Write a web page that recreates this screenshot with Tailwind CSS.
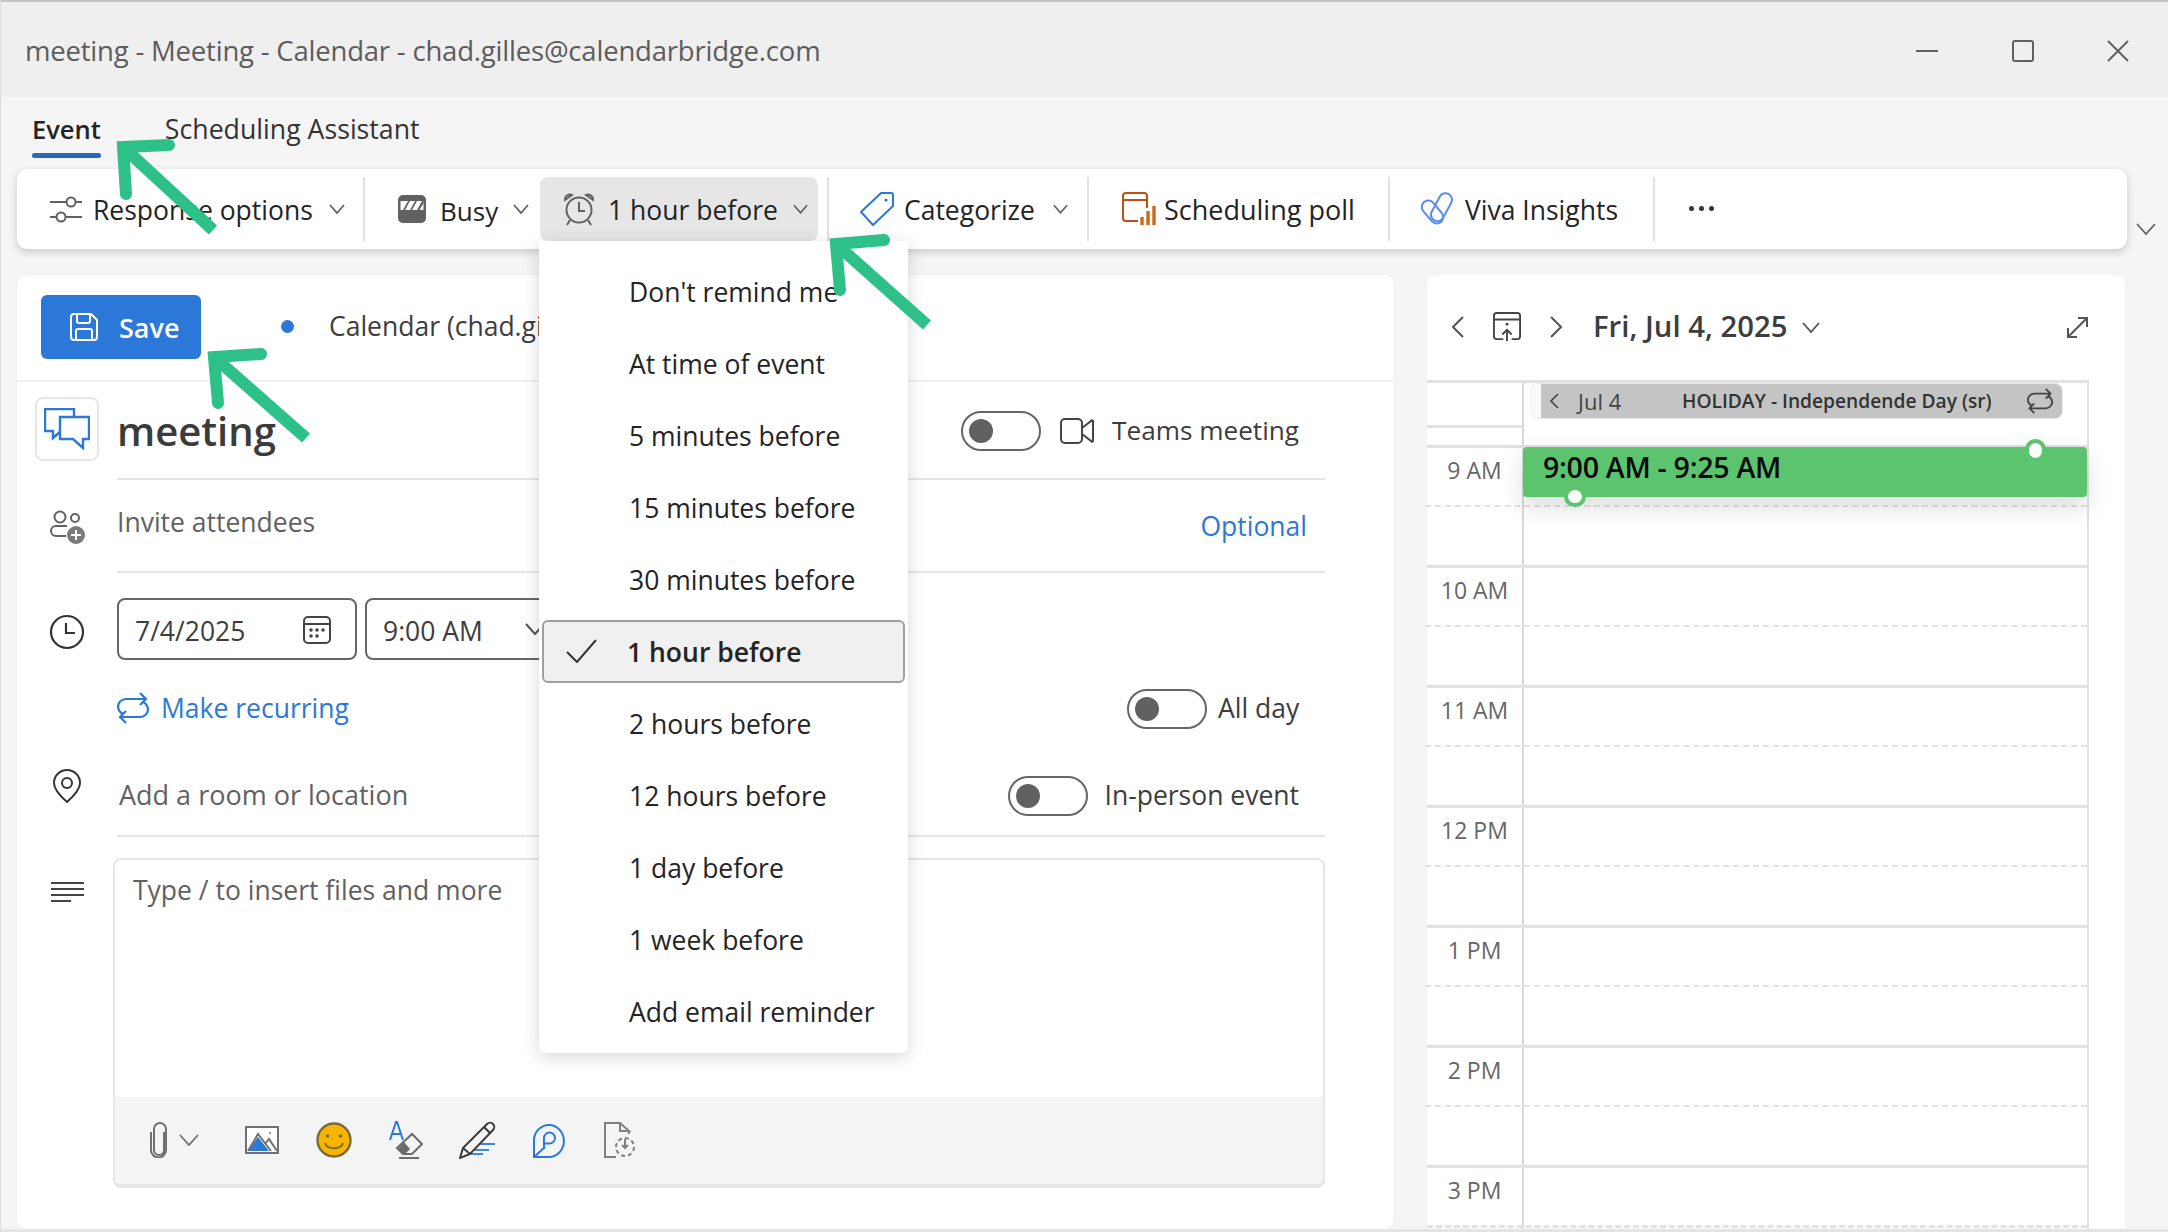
<!doctype html>
<html><head><meta charset="utf-8"><script src="https://cdn.jsdelivr.net/npm/@tailwindcss/browser@4"></script></head>
<body class="m-0">
<div class="relative w-[2168px] h-[1232px] overflow-hidden bg-[#f5f5f5] font-['Open_Sans',sans-serif] text-[#242424] text-[26.5px] flex flex-col">
  <div class="h-[2px] bg-[#c4c4c4]"></div>
  <!-- title bar -->
  <div class="h-[95px] bg-[#efefef] flex items-center pl-[25px] pr-[39px] pt-[3px] justify-between shrink-0">
    <span class="text-[#5c5c5c] text-[27.5px] tracking-[-0.2px]">meeting - Meeting - Calendar - chad.gilles@calendarbridge.com</span>
    <div class="flex items-center gap-[72px] text-[#616161]">
      <svg width="24" height="24" viewBox="0 0 24 24" fill="none" stroke="currentColor" stroke-width="2"><path d="M1 12h22"/></svg>
      <svg width="24" height="24" viewBox="0 0 24 24" fill="none" stroke="currentColor" stroke-width="2"><rect x="2" y="2" width="20" height="20" rx="2"/></svg>
      <svg width="22" height="22" viewBox="0 0 22 22" fill="none" stroke="currentColor" stroke-width="2"><path d="M1 1l20 20M21 1L1 21"/></svg>
    </div>
  </div>
  <!-- tabs -->
  <div class="h-[72px] flex pl-[32px] gap-[64px] relative shrink-0">
    <div class="relative h-[61px] flex items-end pb-[10px] font-semibold text-[25.5px]">Event<div class="absolute left-0 right-0 bottom-0 h-[5px] rounded bg-[#2b66b8]"></div></div>
    <div class="h-[61px] flex items-end pb-[9px] text-[26.7px] text-[#333]">Scheduling Assistant</div>
  </div>
  <!-- toolbar -->
  <div class="ml-[17px] w-[2110px] h-[80px] rounded-[10px] bg-white shadow-[0_3px_8px_rgba(0,0,0,0.18)] flex items-center shrink-0 relative z-10">
    <div class="w-[346px] pl-[33px] flex items-center h-[64px]">
      <svg width="32" height="32" viewBox="0 0 32 32" fill="none" stroke="#616161" stroke-width="2"><path d="M0 9h16M26 9h6M0 24h6M16 24h16"/><circle cx="21" cy="9" r="4.5"/><circle cx="11" cy="24" r="4.5"/></svg>
      <span class="ml-[11px] w-[219px] pt-[4px] whitespace-nowrap">Response options</span>
      <svg class="ml-[17px]" width="16" height="10" viewBox="0 0 16 10" fill="none" stroke="#616161" stroke-width="1.8"><path d="M1 1l7 8 7-8"/></svg>
    </div>
    <div class="w-[2px] h-[64px] bg-[#e0e0e0]"></div>
    <div class="w-[175px] pl-[33px] flex items-center h-[64px]">
      <svg width="28" height="28" viewBox="0 0 28 28"><rect x="0" y="0" width="28" height="28" rx="5" fill="#616161"/><path d="M2.5 6h23v9h-23z" fill="#fff"/><path d="M5 15l5-9h2l-5 9zM12 15l5-9h2l-5 9zM19 15l5-9h1.5v2l-4 7z" fill="#616161"/></svg>
      <span class="ml-[14px] w-[57px] pt-[4px] text-[26px]">Busy</span>
      <svg class="ml-[16px]" width="16" height="10" viewBox="0 0 16 10" fill="none" stroke="#616161" stroke-width="1.8"><path d="M1 1l7 8 7-8"/></svg>
    </div>
    <div class="w-[278px] pl-[23px] flex items-center h-[64px] rounded-[8px] bg-[#e6e6e6]">
      <svg width="32" height="34" viewBox="0 0 32 34" fill="none" stroke="#616161" stroke-width="2"><circle cx="16" cy="18" r="12.5"/><path d="M16 10v9h6M2 8a5 5 0 0 1 7-5zM30 8a5 5 0 0 0-7-5zM7 28l-3 5M25 28l3 5"/></svg>
      <span class="ml-[13px] w-[168px] pt-[4px] whitespace-nowrap">1 hour before</span>
      <svg class="ml-[17px]" width="15" height="10" viewBox="0 0 16 10" fill="none" stroke="#616161" stroke-width="1.8"><path d="M1 1l7 8 7-8"/></svg>
    </div>
    <div class="ml-[9px] w-[2px] h-[64px] bg-[#e0e0e0]"></div>
    <div class="w-[258px] pl-[31px] flex items-center h-[64px]">
      <svg width="34" height="34" viewBox="0 0 34 34" fill="none" stroke="#2b78d8" stroke-width="2"><path d="M21 1h10a2 2 0 0 1 2 2v11L13 33 1 20z" stroke-linejoin="round"/><circle cx="26" cy="8" r="1.6" fill="#2b78d8" stroke="none"/></svg>
      <span class="ml-[10px] w-[133px] pt-[4px] whitespace-nowrap">Categorize</span>
      <svg class="ml-[16px]" width="15" height="10" viewBox="0 0 16 10" fill="none" stroke="#616161" stroke-width="1.8"><path d="M1 1l7 8 7-8"/></svg>
    </div>
    <div class="w-[2px] h-[64px] bg-[#e0e0e0]"></div>
    <div class="w-[299px] pl-[33px] flex items-center h-[64px]">
      <svg width="34" height="34" viewBox="0 0 34 34" fill="none" stroke="#c04f12" stroke-width="2"><path d="M16 29H4a3 3 0 0 1-3-3V4a3 3 0 0 1 3-3h18a3 3 0 0 1 3 3v12M1 8h24"/><path d="M20 33v-8M26 33V19M32 33V14" stroke-width="3.4" stroke="#d0651c"/></svg>
      <span class="ml-[8px] w-[192px] pt-[3px] whitespace-nowrap text-[27px]">Scheduling poll</span>
    </div>
    <div class="w-[2px] h-[64px] bg-[#e0e0e0]"></div>
    <div class="w-[263px] pl-[31px] flex items-center h-[64px]">
      <svg width="32" height="36" viewBox="0 0 32 36" fill="none" stroke="#5b8cf0" stroke-width="2"><rect x="5" y="8" width="13" height="26" rx="6.5" transform="rotate(-40 11.5 21)"/><rect x="14" y="1" width="13" height="30" rx="6.5" transform="rotate(28 20 16)"/></svg>
      <span class="ml-[12px] w-[157px] pt-[4px] whitespace-nowrap">Viva Insights</span>
    </div>
    <div class="w-[2px] h-[64px] bg-[#e0e0e0]"></div>
    <div class="pl-[34px] pb-[2px] flex gap-[5px]"><span class="w-[5px] h-[5px] rounded-full bg-[#333]"></span><span class="w-[5px] h-[5px] rounded-full bg-[#333]"></span><span class="w-[5px] h-[5px] rounded-full bg-[#333]"></span></div>
  </div>
  <svg class="absolute left-[2136px] top-[223px]" width="20" height="12" viewBox="0 0 20 12" fill="none" stroke="#616161" stroke-width="1.8"><path d="M1 1l9 10 9-10"/></svg>
  <!-- main -->
  <div class="flex pl-[17px] mt-[26px] h-[954px] gap-[33px] shrink-0">
    <!-- form card -->
    <div class="w-[1377px] bg-white rounded-[10px] shadow-[0_0_3px_rgba(0,0,0,0.05)] flex flex-col">
      <div class="h-[107px] border-b-2 border-[#f0f0f0] flex items-center pl-[24px] pb-[2px]">
        <div class="w-[160px] h-[64px] rounded-[6px] bg-[#2b78d8] flex items-center pl-[29px] text-white font-semibold text-[27px]">
          <svg width="28" height="28" viewBox="0 0 28 28" fill="none" stroke="#fff" stroke-width="2"><path d="M1 4a3 3 0 0 1 3-3h17l6 6v17a3 3 0 0 1-3 3H4a3 3 0 0 1-3-3z"/><path d="M7 1v7a2 2 0 0 0 2 2h9a2 2 0 0 0 2-2V1M6 27V18a2 2 0 0 1 2-2h12a2 2 0 0 1 2 2v9"/></svg>
          <span class="ml-[21px] pt-[3px]">Save</span>
        </div>
        <span class="ml-[80px] w-[13px] h-[13px] rounded-full bg-[#2b78d8]"></span>
        <span class="ml-[35px] text-[#3d3d3d] whitespace-nowrap">Calendar (chad.gilles</span>
      </div>
      <!-- title -->
      <div class="h-[98px] flex shrink-0">
        <div class="w-[100px] pl-[18px] pt-[15px]">
          <div class="w-[64px] h-[64px] rounded-[8px] border-2 border-[#e6e6e6] flex items-center justify-center">
            <svg width="46" height="42" viewBox="0 0 46 42" fill="none" stroke="#2b78d8" stroke-width="2.4"><path d="M30 9V1H1v22h8v7l8-7"/><path d="M16 9h29v22h-6v9l-10-9H16z" fill="#fff"/></svg>
          </div>
        </div>
        <div class="w-[1208px] border-b-2 border-[#e6e6e6] flex items-center pt-[2px]">
          <span class="text-[40px] font-semibold text-[#3b3b3b] w-[844px]">meeting</span>
          <div class="w-[80px] h-[40px] rounded-full border-2 border-[#666] flex items-center pl-[6px]"><span class="w-[24px] h-[24px] rounded-full bg-[#616161]"></span></div>
          <svg class="ml-[19px]" width="34" height="26" viewBox="0 0 34 26" fill="none" stroke="#444" stroke-width="2"><rect x="1" y="1" width="21" height="24" rx="4"/><path d="M22 10l9-7a1 1 0 0 1 2 1v18a1 1 0 0 1-2 1l-9-7"/></svg>
          <span class="ml-[18px] text-[#3d3d3d] text-[26.2px] whitespace-nowrap">Teams meeting</span>
        </div>
      </div>
      <!-- attendees -->
      <div class="h-[93px] flex shrink-0">
        <div class="w-[100px] flex justify-center pt-[30px]">
          <svg width="36" height="34" viewBox="0 0 36 34" fill="none" stroke="#616161" stroke-width="2"><circle cx="11" cy="7" r="5.5"/><circle cx="26" cy="8" r="4"/><path d="M18 16H7a5 5 0 0 0-5 5 5 5 0 0 0 5 5h10"/><circle cx="27" cy="25" r="9" fill="#7a7a7a" stroke="none"/><path d="M27 20v10M22 25h10" stroke="#fff"/></svg>
        </div>
        <div class="w-[1208px] border-b-2 border-[#e6e6e6] flex justify-between pr-[18px]">
          <span class="pt-[23px] text-[#616161]">Invite attendees</span>
          <span class="pt-[27px] text-[#2b78d8]">Optional</span>
        </div>
      </div>
      <!-- date -->
      <div class="flex h-[87px] items-end shrink-0">
        <div class="w-[100px] flex justify-center pb-[10px]">
          <svg width="36" height="36" viewBox="0 0 36 36" fill="none" stroke="#333" stroke-width="2.2"><circle cx="18" cy="18" r="16"/><path d="M17 9v10h9"/></svg>
        </div>
        <div class="w-[240px] h-[62px] rounded-[8px] border-2 border-[#666] flex items-center justify-between pl-[16px] pr-[24px] text-[#3d3d3d]"><span class="pt-[5px]">7/4/2025</span>
          <svg class="mt-[2px]" width="28" height="28" viewBox="0 0 28 28" fill="none" stroke="#444" stroke-width="2"><rect x="1" y="1" width="26" height="26" rx="4"/><path d="M1 8h26"/><g fill="#444" stroke="none"><circle cx="8" cy="14" r="1.8"/><circle cx="14" cy="14" r="1.8"/><circle cx="20" cy="14" r="1.8"/><circle cx="8" cy="20" r="1.8"/><circle cx="14" cy="20" r="1.8"/></g></svg>
        </div>
        <div class="ml-[8px] w-[200px] h-[62px] rounded-[8px] border-2 border-[#666] flex items-center justify-between pl-[16px] pr-[18px] text-[#3d3d3d]"><span class="pt-[5px]">9:00 AM</span>
          <svg width="20" height="12" viewBox="0 0 20 12" fill="none" stroke="#555" stroke-width="2"><path d="M1 1l9 10 9-10"/></svg>
        </div>
      </div>
      <!-- recurring -->
      <div class="h-[100px] flex shrink-0 relative">
        <div class="w-[100px]"></div>
        <div class="flex items-center w-[1208px] text-[#2b78d8] h-[96px]">
          <svg width="32" height="32" viewBox="0 0 32 32" fill="none" stroke="#2b78d8" stroke-width="2.2"><path d="M6 22a9 9 0 0 1-5-7 8 8 0 0 1 8-8h20M23 1l6 6-6 6M26 10a9 9 0 0 1 5 7 8 8 0 0 1-8 8H3M9 19l-6 6 6 6"/></svg>
          <span class="ml-[12px] w-[1010px] pt-[2px] whitespace-nowrap">Make recurring</span>
        </div>
        <div class="absolute left-[1110px] top-[29px] flex items-center text-[#3d3d3d]">
          <div class="w-[80px] h-[40px] rounded-full border-2 border-[#666] flex items-center pl-[6px]"><span class="w-[24px] h-[24px] rounded-full bg-[#616161]"></span></div>
          <span class="ml-[11px]">All day</span>
        </div>
      </div>
      <!-- location -->
      <div class="h-[77px] flex shrink-0">
        <div class="w-[100px] flex justify-center">
          <svg class="mt-[9px]" width="28" height="34" viewBox="0 0 28 34" fill="none" stroke="#333" stroke-width="2"><path d="M14 33C6 26 1 20 1 14a13 13 0 0 1 26 0c0 6-5 12-13 19z"/><circle cx="14" cy="14" r="5"/></svg>
        </div>
        <div class="w-[1208px] border-b-2 border-[#e6e6e6] flex items-center pb-[4px] justify-between pr-[26px]">
          <span class="pl-[2px] text-[#616161] text-[27px]">Add a room or location</span>
          <div class="flex items-center text-[#3d3d3d]">
            <div class="w-[80px] h-[40px] rounded-full border-2 border-[#666] flex items-center pl-[6px]"><span class="w-[24px] h-[24px] rounded-full bg-[#616161]"></span></div>
            <span class="ml-[16px] whitespace-nowrap">In-person event</span>
          </div>
        </div>
      </div>
      <!-- editor -->
      <div class="flex mt-[21px] shrink-0">
        <div class="w-[96px] pl-[34px] pt-[23px]">
          <svg width="33" height="22" viewBox="0 0 33 22" fill="none" stroke="#444" stroke-width="2"><path d="M0 2h33M0 8h33M0 14h33M0 20h20"/></svg>
        </div>
        <div class="w-[1212px] h-[330px] rounded-[8px] border-2 border-[#e6e6e6] border-b-4 flex flex-col overflow-hidden">
          <div class="h-[237px] pl-[18px] pt-[11px] text-[#616161]">Type / to insert files and more</div>
          <div class="flex-1 bg-[#f4f4f4] flex items-center pl-[35px] pb-[2px]">
            <svg width="18" height="36" viewBox="0 0 18 36" fill="none" stroke="#707070" stroke-width="2"><path d="M14 10v18a5 5 0 0 1-10 0V7a6 6 0 0 1 12 0v21a7.5 7.5 0 0 1-15 0V10"/></svg>
            <svg class="ml-[11px]" width="20" height="12" viewBox="0 0 20 12" fill="none" stroke="#707070" stroke-width="1.8"><path d="M1 1l9 10 9-10"/></svg>
            <svg class="ml-[46px]" width="34" height="28" viewBox="0 0 34 28"><rect x="1" y="1" width="32" height="26" fill="#fff" stroke="#707070" stroke-width="2"/><path d="M3 25L13 11l11 14z" fill="#2b78d8"/><path d="M3 25L13 8l13 17M20 18l4-5 8 12" fill="none" stroke="#707070" stroke-width="2"/><circle cx="25" cy="7" r="1" fill="#707070"/></svg>
            <svg class="ml-[37px]" width="36" height="36" viewBox="0 0 36 36"><circle cx="18" cy="18" r="16.5" fill="#f8b500" stroke="#7a6a3a" stroke-width="2.4"/><circle cx="11.5" cy="14" r="1.8" fill="#7a6a3a"/><circle cx="24.5" cy="14" r="1.8" fill="#7a6a3a"/><path d="M9 21c2 7 16 7 18 0" fill="none" stroke="#7a6a3a" stroke-width="2"/></svg>
            <svg class="ml-[37px]" width="34" height="38" viewBox="0 0 34 38" fill="none" stroke-width="2"><path d="M1 19L7 1h1l6 18M3 13h9" stroke="#2b78d8"/><path d="M23 13l10 10-10 10H14L8 27z" fill="#f4f4f4" stroke="#6b6b6b"/><path d="M9 28l6-7 6 7-5 5h-1z" fill="#6b6b6b" stroke="none"/><path d="M10 37h20" stroke="#6b6b6b"/></svg>
            <svg class="ml-[36px]" width="38" height="38" viewBox="0 0 38 38" fill="none" stroke-width="2"><path d="M18 23h18M16 29h14M12 33h12" stroke="#3b8ad8"/><path d="M1 37l3-10L28 3a4 4 0 0 1 6 6L11 33z" fill="#f4f4f4" stroke="#3a3a3a"/><path d="M25 6l6 6M4 27l7 6" stroke="#3a3a3a"/></svg>
            <svg class="ml-[36px]" width="32" height="36" viewBox="0 0 32 36" fill="none" stroke="#2b78d8" stroke-width="2"><path d="M1 35V17a15 16 0 1 1 15 18zM1 35l11-10"/><path d="M11 27V16a5.5 5.5 0 1 1 5.5 5.5H11"/></svg>
            <svg class="ml-[39px]" width="32" height="36" viewBox="0 0 32 36" fill="none" stroke="#808080" stroke-width="2"><path d="M12 35H1V1h15v8h9l-9-8M25 9v3"/><circle cx="21" cy="25" r="9" stroke-dasharray="4 3"/><path d="M21 17v9M18 23l3 3 3-3"/></svg>
          </div>
        </div>
      </div>
    </div>
    <!-- calendar card -->
    <div class="w-[698px] bg-white rounded-t-[10px] flex flex-col">
      <div class="h-[105px] flex items-center relative text-[#3d3d3d] pb-[1px]">
        <svg class="ml-[25px]" width="12" height="22" viewBox="0 0 12 22" fill="none" stroke="#555" stroke-width="2"><path d="M11 1L1 11l10 10"/></svg>
        <svg class="ml-[29px]" width="28" height="32" viewBox="0 0 30 32" fill="none" stroke="#444" stroke-width="2"><path d="M11 29H4a3 3 0 0 1-3-3V4a3 3 0 0 1 3-3h22a3 3 0 0 1 3 3v22a3 3 0 0 1-3 3h-6M1 8h28M15 31V19M10 24l5-5 5 5"/><circle cx="15" cy="13" r="1.5" fill="#444" stroke="none"/></svg>
        <svg class="ml-[29px]" width="12" height="22" viewBox="0 0 12 22" fill="none" stroke="#555" stroke-width="2"><path d="M1 1l10 10L1 21"/></svg>
        <span class="ml-[31px] font-semibold text-[29.3px] w-[191px] whitespace-nowrap">Fri, Jul 4, 2025</span>
        <svg class="ml-[18px]" width="18" height="11" viewBox="0 0 18 11" fill="none" stroke="#555" stroke-width="1.8"><path d="M1 1l8 9 8-9"/></svg>
        <svg class="absolute left-[640px] top-[42px]" width="21" height="21" viewBox="0 0 21 21" fill="none" stroke="#555" stroke-width="2"><path d="M2 19L19 2M11 1h9v9M1 11v9h9"/></svg>
      </div>
      <div class="w-[662px] relative flex-1 border-t-[3px] border-r-[2px] border-[#e2e2e2] flex flex-col">
        <!-- all-day -->
        <div class="h-[65px] flex shrink-0 border-b-[3px] border-[#e2e2e2]">
          <div class="w-[97px] border-r-2 border-[#d8d8d8] h-full relative"><div class="absolute left-0 right-0 top-[42px] h-[3px] bg-[#e2e2e2]"></div></div>
          <div class="pl-[5px]">
            <div class="h-[36px] w-[534px] rounded-[8px] border border-[#e8e8e8] border-l-[12px] border-l-[#f8f8f8] bg-[#c4c4c4] flex items-center text-[22px] text-[#333] relative">
              <svg class="ml-[9px]" width="9" height="16" viewBox="0 0 9 16" fill="none" stroke="#444" stroke-width="1.6"><path d="M8 1L1 8l7 7"/></svg>
              <span class="ml-[19px] text-[#444]">Jul 4</span>
              <span class="absolute left-[141px] whitespace-nowrap font-semibold text-[19.2px]">HOLIDAY - Independende Day (sr)</span>
              <svg class="absolute right-[9px]" width="26" height="26" viewBox="0 0 32 32" fill="none" stroke="#444" stroke-width="2.2"><path d="M6 22a9 9 0 0 1-5-7 8 8 0 0 1 8-8h20M23 1l6 6-6 6M26 10a9 9 0 0 1 5 7 8 8 0 0 1-8 8H3M9 19l-6 6 6 6"/></svg>
            </div>
          </div>
        </div>
        <!-- hours -->
        <div class="h-[120px] flex shrink-0 border-b-[3px] border-[#e2e2e2]"><div class="w-[97px] border-r-2 border-[#d8d8d8] text-center text-[23px] text-[#666] pt-[5px]">9 AM</div><div class="flex-1 relative"><div class="absolute -left-[99px] right-0 top-[57px] border-t-2 border-dashed border-[#e2e2e2]"></div></div></div>
        <div class="h-[120px] flex shrink-0 border-b-[3px] border-[#e2e2e2]"><div class="w-[97px] border-r-2 border-[#d8d8d8] text-center text-[23px] text-[#666] pt-[5px]">10 AM</div><div class="flex-1 relative"><div class="absolute -left-[99px] right-0 top-[57px] border-t-2 border-dashed border-[#e2e2e2]"></div></div></div>
        <div class="h-[120px] flex shrink-0 border-b-[3px] border-[#e2e2e2]"><div class="w-[97px] border-r-2 border-[#d8d8d8] text-center text-[23px] text-[#666] pt-[5px]">11 AM</div><div class="flex-1 relative"><div class="absolute -left-[99px] right-0 top-[57px] border-t-2 border-dashed border-[#e2e2e2]"></div></div></div>
        <div class="h-[120px] flex shrink-0 border-b-[3px] border-[#e2e2e2]"><div class="w-[97px] border-r-2 border-[#d8d8d8] text-center text-[23px] text-[#666] pt-[5px]">12 PM</div><div class="flex-1 relative"><div class="absolute -left-[99px] right-0 top-[57px] border-t-2 border-dashed border-[#e2e2e2]"></div></div></div>
        <div class="h-[120px] flex shrink-0 border-b-[3px] border-[#e2e2e2]"><div class="w-[97px] border-r-2 border-[#d8d8d8] text-center text-[23px] text-[#666] pt-[5px]">1 PM</div><div class="flex-1 relative"><div class="absolute -left-[99px] right-0 top-[57px] border-t-2 border-dashed border-[#e2e2e2]"></div></div></div>
        <div class="h-[120px] flex shrink-0 border-b-[3px] border-[#e2e2e2]"><div class="w-[97px] border-r-2 border-[#d8d8d8] text-center text-[23px] text-[#666] pt-[5px]">2 PM</div><div class="flex-1 relative"><div class="absolute -left-[99px] right-0 top-[57px] border-t-2 border-dashed border-[#e2e2e2]"></div></div></div>
        <div class="flex-1 flex relative"><div class="w-[97px] border-r-2 border-[#d8d8d8] text-center text-[23px] text-[#666] pt-[5px]">3 PM</div><div class="absolute left-0 right-0 top-[57px] border-t-[3px] border-dashed border-[#e2e2e2]"></div></div>
      </div>
    </div>
  </div>
  <!-- bottom strip -->
  <div class="absolute left-0 right-0 bottom-0 h-[3px] bg-[#e4e4e4]"></div>
  <div class="absolute left-0 top-0 bottom-0 w-[1px] bg-[#dcdcdc]"></div>
  <!-- event -->
  <div class="absolute left-[1523px] top-[447px] w-[564px] h-[50px] rounded-[4px] bg-[#5cc46e] shadow-[0_10px_24px_rgba(0,0,0,0.14)] pl-[20px] text-[28.6px] font-semibold text-[#0a0a0a] leading-[40px] whitespace-nowrap tracking-[-0.3px]">9:00 AM - 9:25 AM</div>
  <div class="absolute left-[2025px] top-[439px] w-[21px] h-[23px] rounded-full bg-white border-[4px] border-[#5cc46e]"></div>
  <div class="absolute left-[1564px] top-[486px] w-[22px] h-[21px] rounded-full bg-white border-[4px] border-[#5cc46e]"></div>
  <!-- dropdown menu -->
  <div class="absolute left-[539px] top-[241px] w-[369px] h-[812px] bg-white rounded-b-[6px] shadow-[0_4px_18px_rgba(0,0,0,0.16)] flex flex-col pt-[14px] text-[26.5px] text-[#242424] z-20">
    <div class="h-[72px] pl-[90px] pt-[4px] flex items-center whitespace-nowrap">Don't remind me</div>
    <div class="h-[72px] pl-[90px] pt-[4px] flex items-center whitespace-nowrap">At time of event</div>
    <div class="h-[72px] pl-[90px] pt-[4px] flex items-center whitespace-nowrap">5 minutes before</div>
    <div class="h-[72px] pl-[90px] pt-[4px] flex items-center whitespace-nowrap">15 minutes before</div>
    <div class="h-[72px] pl-[90px] pt-[4px] flex items-center whitespace-nowrap">30 minutes before</div>
    <div class="h-[72px] flex items-center"><div class="ml-[3px] w-[363px] h-[63px] rounded-[6px] border-2 border-[#a0a0a0] bg-[#f0f0f0] flex items-center pl-[22px] font-semibold whitespace-nowrap">
      <svg width="31" height="24" viewBox="0 0 31 24" fill="none" stroke="#333" stroke-width="2"><path d="M1 13l10 10L30 1"/></svg>
      <span class="ml-[30px] pt-[4px]">1 hour before</span></div></div>
    <div class="h-[72px] pl-[90px] pt-[4px] flex items-center whitespace-nowrap">2 hours before</div>
    <div class="h-[72px] pl-[90px] pt-[4px] flex items-center whitespace-nowrap">12 hours before</div>
    <div class="h-[72px] pl-[90px] pt-[4px] flex items-center whitespace-nowrap">1 day before</div>
    <div class="h-[72px] pl-[90px] pt-[4px] flex items-center whitespace-nowrap">1 week before</div>
    <div class="h-[72px] pl-[90px] pt-[4px] flex items-center whitespace-nowrap">Add email reminder</div>
  </div>
  <!-- annotation arrows -->
  <svg class="absolute left-0 top-0 z-30 pointer-events-none" width="2168" height="1232" viewBox="0 0 2168 1232" fill="none" stroke="#2dc088" stroke-width="12" stroke-linecap="round">
    <path d="M126 194L123 147L169 145" stroke-linejoin="miter"/><path d="M123 147L213 230" stroke-linecap="butt"/>
    <path d="M840 290L836 244L884 240"/><path d="M836 244L927 325" stroke-linecap="butt"/>
    <path d="M218 403L214 357L261 354"/><path d="M214 357L306 438" stroke-linecap="butt"/>
  </svg>
</div>
</body></html>
